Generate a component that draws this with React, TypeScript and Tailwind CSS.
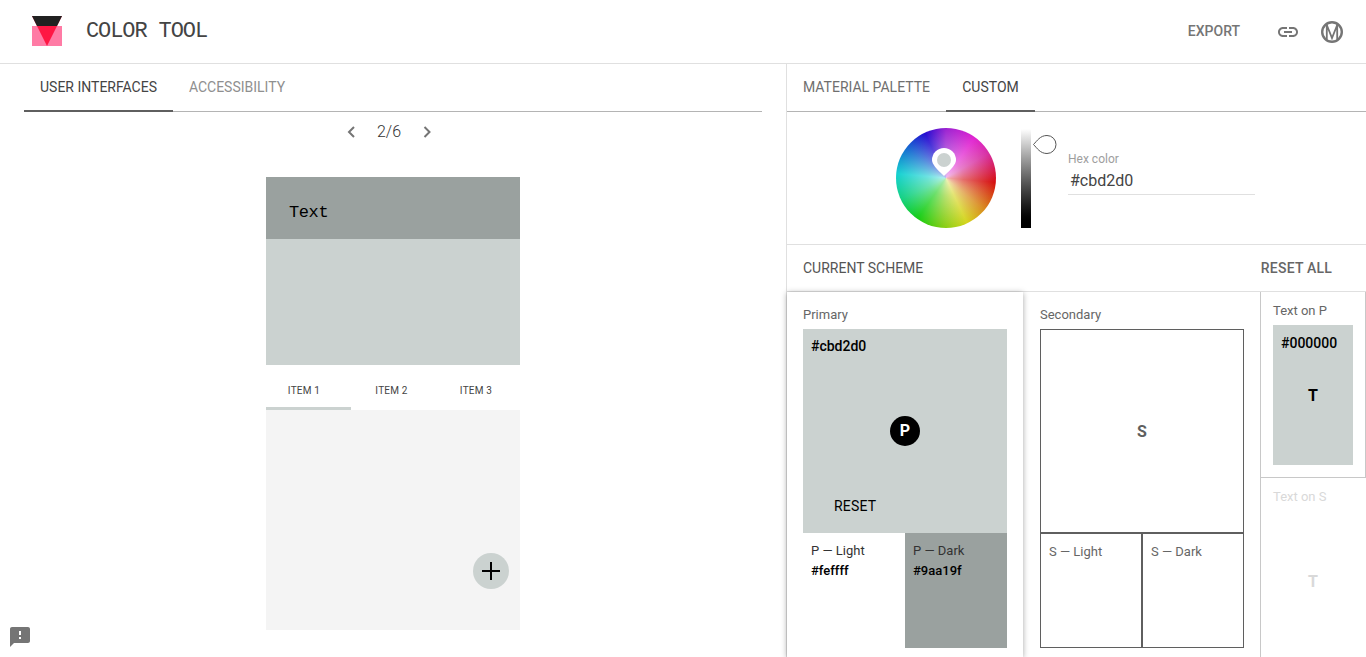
import React from "react";

const Chevron = ({ dir }: { dir: "l" | "r" }) => (
  <svg width="24" height="24" viewBox="0 0 24 24" fill="none" stroke="#757575" strokeWidth="2">
    <path d={dir === "l" ? "M15 7.500 10 12.500l5 5" : "M9.500 7.500l5 5-5 5"} transform="translate(0 -0.5)" />
  </svg>
);

const Swatch = ({ label, className, children }: { label?: string; className: string; children?: React.ReactNode }) => (
  <div className={className}>
    {label && <div>{label}</div>}
    {children}
  </div>
);

export default function App() {
  return (
    <div className="relative h-[657px] w-[1366px] overflow-hidden bg-white font-['Roboto',sans-serif] text-[#444]">
      {/* header */}
      <header className="flex h-[64px] items-center border-b border-[#e0e0e0] pl-[32px] pr-[22px]">
        <svg width="30" height="30" viewBox="0 0 30 30" className="-mt-[1px] shrink-0">
          <rect x="0" y="10" width="30" height="20" fill="#ff7ba5" />
          <path d="M0 0h30L15 30z" fill="#ff1744" />
          <path d="M0 0h30l-5 10H5z" fill="#212121" />
        </svg>
        <div className="ml-[24px] font-['Liberation_Mono',monospace] text-[22px] leading-[28px] tracking-[-1.1px] text-[#444]">COLOR TOOL</div>
        <div className="ml-auto text-[14px] font-medium text-[#757575]">EXPORT</div>
        <svg width="24" height="24" viewBox="0 0 24 24" fill="#757575" className="ml-[36px]">
          <path d="M3.9 12c0-1.71 1.39-3.1 3.1-3.1h4V7H7c-2.76 0-5 2.24-5 5s2.24 5 5 5h4v-1.9H7c-1.71 0-3.1-1.39-3.1-3.1zM8 13h8v-2H8v2zm9-6h-4v1.9h4c1.71 0 3.1 1.39 3.1 3.1s-1.39 3.1-3.1 3.1h-4V17h4c2.76 0 5-2.24 5-5s-2.24-5-5-5z" />
        </svg>
        <svg width="24" height="24" viewBox="0 0 24 24" fill="none" stroke="#757575" className="ml-[20px]">
          <circle cx="12" cy="12" r="9.800" strokeWidth="2.400" />
          <path d="M6.800 4.500v15M17.200 4.500v15M7 5.500 12 18l5-12.500" strokeWidth="1.800" />
        </svg>
      </header>

      <div className="flex h-[593px]">
        {/* left pane */}
        <section className="w-[786px] shrink-0 px-[24px]">
          <div className="flex h-[48px] border-b border-[#b4b4b4] text-[14px]">
            <div className="flex h-[48px] w-[149px] items-center justify-center border-b-2 border-[#5f5f5f] text-[#444]">USER INTERFACES</div>
            <div className="flex h-[47px] w-[128px] items-center justify-center text-[#8f8f8f]">ACCESSIBILITY</div>
          </div>
          <div className="mt-[8px] flex h-[24px] items-center justify-center gap-[13px] pr-[8px] text-[16px] font-light text-[#333]">
            <Chevron dir="l" />
            <span className="w-[26px] text-center">2/6</span>
            <Chevron dir="r" />
          </div>
          <div className="ml-[242px] mt-[33px] flex h-[453px] w-[254px] flex-col">
            <div className="flex h-[62px] items-center bg-[#9aa19f] pl-[23px] pt-[10px] font-['Liberation_Mono',monospace] text-[17px] tracking-[-0.4px] text-black">Text</div>
            <div className="h-[126px] bg-[#cbd2d0]" />
            <div className="flex h-[45px] text-[10px] tracking-[0.2px] text-[#444]">
              <div className="flex w-[85px] items-center justify-center border-b-[3px] border-[#cbd2d0] pr-[9px] pt-[8px]">ITEM 1</div>
              <div className="flex w-[84px] items-center justify-center pr-[3px] pt-[5px]">ITEM 2</div>
              <div className="flex w-[85px] items-center justify-center pr-[3px] pt-[5px]">ITEM 3</div>
            </div>
            <div className="flex flex-1 items-end justify-end bg-[#f4f4f4] pb-[41px] pr-[11px]">
              <div className="flex h-[36px] w-[36px] items-center justify-center rounded-full bg-[#cbd2d0]">
                <svg width="24" height="24" viewBox="0 0 24 24" fill="#000">
                  <path d="M11 3h2v8h8v2h-8v8h-2v-8H3v-2h8z" />
                </svg>
              </div>
            </div>
          </div>
        </section>

        {/* right pane */}
        <section className="flex-1 border-l border-[#e0e0e0]">
          <div className="flex h-[48px] border-b border-[#b4b4b4] text-[14px]">
            <div className="flex h-[47px] w-[159px] items-center justify-center text-[#6f6f6f]">MATERIAL PALETTE</div>
            <div className="flex h-[48px] w-[89px] items-center justify-center border-b-2 border-[#5f5f5f] text-[#444]">CUSTOM</div>
          </div>

          {/* colour picker */}
          <div className="flex h-[133px] border-b border-[#e0e0e0] pl-[109px] pt-[16px]">
            <div className="relative h-[100px] w-[100px] shrink-0 rounded-full bg-[conic-gradient(from_0deg,#9a1fd0_0deg,#e020d0_35deg,#d62aa0_60deg,#d40a0a_95deg,#d88a1a_130deg,#d4d41a_155deg,#7ccc10_185deg,#10cc10_215deg,#10d080_245deg,#10d0d0_275deg,#1070d0_305deg,#2008d0_335deg,#9a1fd0_360deg)]">
              <div className="absolute inset-0 rounded-full bg-[radial-gradient(circle,rgba(255,255,255,0.7)_0%,rgba(255,255,255,0.4)_25%,rgba(255,255,255,0)_72%)]" />
              <svg width="24" height="30" viewBox="0 0 24 30" className="absolute left-[36px] top-[20px]">
                <path d="M12 0a12 12 0 0 1 12 12c0 4-4 8.500-12 16C4 20.500 0 16 0 12A12 12 0 0 1 12 0z" fill="#fff" />
                <circle cx="12" cy="12" r="7" fill="#cbd2d0" />
              </svg>
            </div>
            <div className="relative ml-[25px] mt-[1px] h-[99px] w-[10px] bg-gradient-to-b from-white to-black">
              <svg width="26" height="22" viewBox="0 0 26 22" className="absolute left-[11px] top-[5px]">
                <path d="M1.500 10.500C5 7 8 1.500 15 1.500a9 9 0 0 1 0 18C8 19.500 5 14 1.500 10.500z" fill="#fff" stroke="#555" strokeWidth="1" />
              </svg>
            </div>
            <div className="ml-[37px] mt-[24px] w-[187px]">
              <div className="text-[12px] leading-[14px] text-[#9e9e9e]">Hex color</div>
              <div className="h-[29px] border-b border-[#e0e0e0] pl-[2px] pt-[5px] text-[16px] leading-[20px] text-[#444]">#cbd2d0</div>
            </div>
          </div>

          {/* scheme header */}
          <div className="flex h-[47px] items-center justify-between border-b border-[#e0e0e0] pl-[16px] pr-[34px] text-[14px]">
            <span className="text-[#555]">CURRENT SCHEME</span>
            <span className="font-medium tracking-[0.2px] text-[#666]">RESET ALL</span>
          </div>

          {/* scheme */}
          <div className="flex h-[365px]">
            <div className="relative z-10 w-[236px] shrink-0 bg-white px-[16px] pt-[15px] shadow-[0_1px_6px_rgba(0,0,0,0.35)]">
              <div className="h-[22px] text-[13px] leading-[15px] text-[#666]">Primary</div>
              <div className="relative flex h-[204px] items-center justify-center bg-[#cbd2d0] text-[14px] text-black">
                <div className="absolute left-[8px] top-[7px] text-[14px] font-medium">#cbd2d0</div>
                <div className="flex h-[30px] w-[30px] items-center justify-center rounded-full bg-black text-[16px] font-bold text-white">P</div>
                <div className="absolute bottom-[16px] left-[31px] tracking-[0.2px]">RESET</div>
              </div>
              <div className="flex h-[115px] text-[13px] leading-[20px]">
                <Swatch label="P — Light" className="w-[102px] pl-[8px] pt-[8px] text-[#333]">
                  <div className="font-medium text-black">#feffff</div>
                </Swatch>
                <Swatch label="P — Dark" className="w-[102px] bg-[#9aa19f] pl-[8px] pt-[8px] text-[#333]">
                  <div className="font-medium text-black">#9aa19f</div>
                </Swatch>
              </div>
            </div>

            <div className="w-[237px] shrink-0 pl-[17px] pt-[15px]">
              <div className="h-[22px] text-[13px] leading-[15px] text-[#666]">Secondary</div>
              <div className="flex h-[204px] w-[204px] items-center justify-center border border-[#5f5f5f] pt-[2px] text-[16px] font-bold text-[#5f5f5f]">S</div>
              <div className="flex h-[115px] w-[204px] text-[13px] leading-[20px] text-[#666]">
                <Swatch label="S — Light" className="w-[102px] border border-[#5f5f5f] pl-[8px] pt-[8px]" />
                <Swatch label="S — Dark" className="w-[102px] border border-[#5f5f5f] pl-[8px] pt-[8px]" />
              </div>
            </div>

            <div className="w-[106px] shrink-0">
              <div className="h-[186px] border border-t-0 border-[#c8c8c8] pl-[12px] pt-[11px]">
                <div className="h-[22px] text-[13px] leading-[15px] text-[#666]">Text on P</div>
                <div className="relative flex h-[140px] w-[80px] items-center justify-center bg-[#cbd2d0] pt-[2px] text-black">
                  <div className="absolute left-[8px] top-[8px] text-[14px] font-medium">#000000</div>
                  <span className="text-[16px] font-bold">T</span>
                </div>
              </div>
              <div className="h-[179px] border-l border-[#c8c8c8] pl-[12px] pt-[11px] text-[#d9d9d9]">
                <div className="h-[22px] text-[13px] leading-[15px]">Text on S</div>
                <div className="flex h-[140px] w-[80px] items-center justify-center pt-[2px] text-[16px] font-bold">T</div>
              </div>
            </div>
          </div>
        </section>
      </div>

      {/* feedback */}
      <svg width="24" height="24" viewBox="0 0 24 24" fill="#757575" className="absolute bottom-[8px] left-[8px]">
        <path d="M20 2H4c-1.100 0-1.990.9-1.990 2L2 22l4-4h14c1.100 0 2-.9 2-2V4c0-1.100-.9-2-2-2zm-7 12h-2v-2h2v2zm0-4h-2V6h2v4z" />
      </svg>
    </div>
  );
}
